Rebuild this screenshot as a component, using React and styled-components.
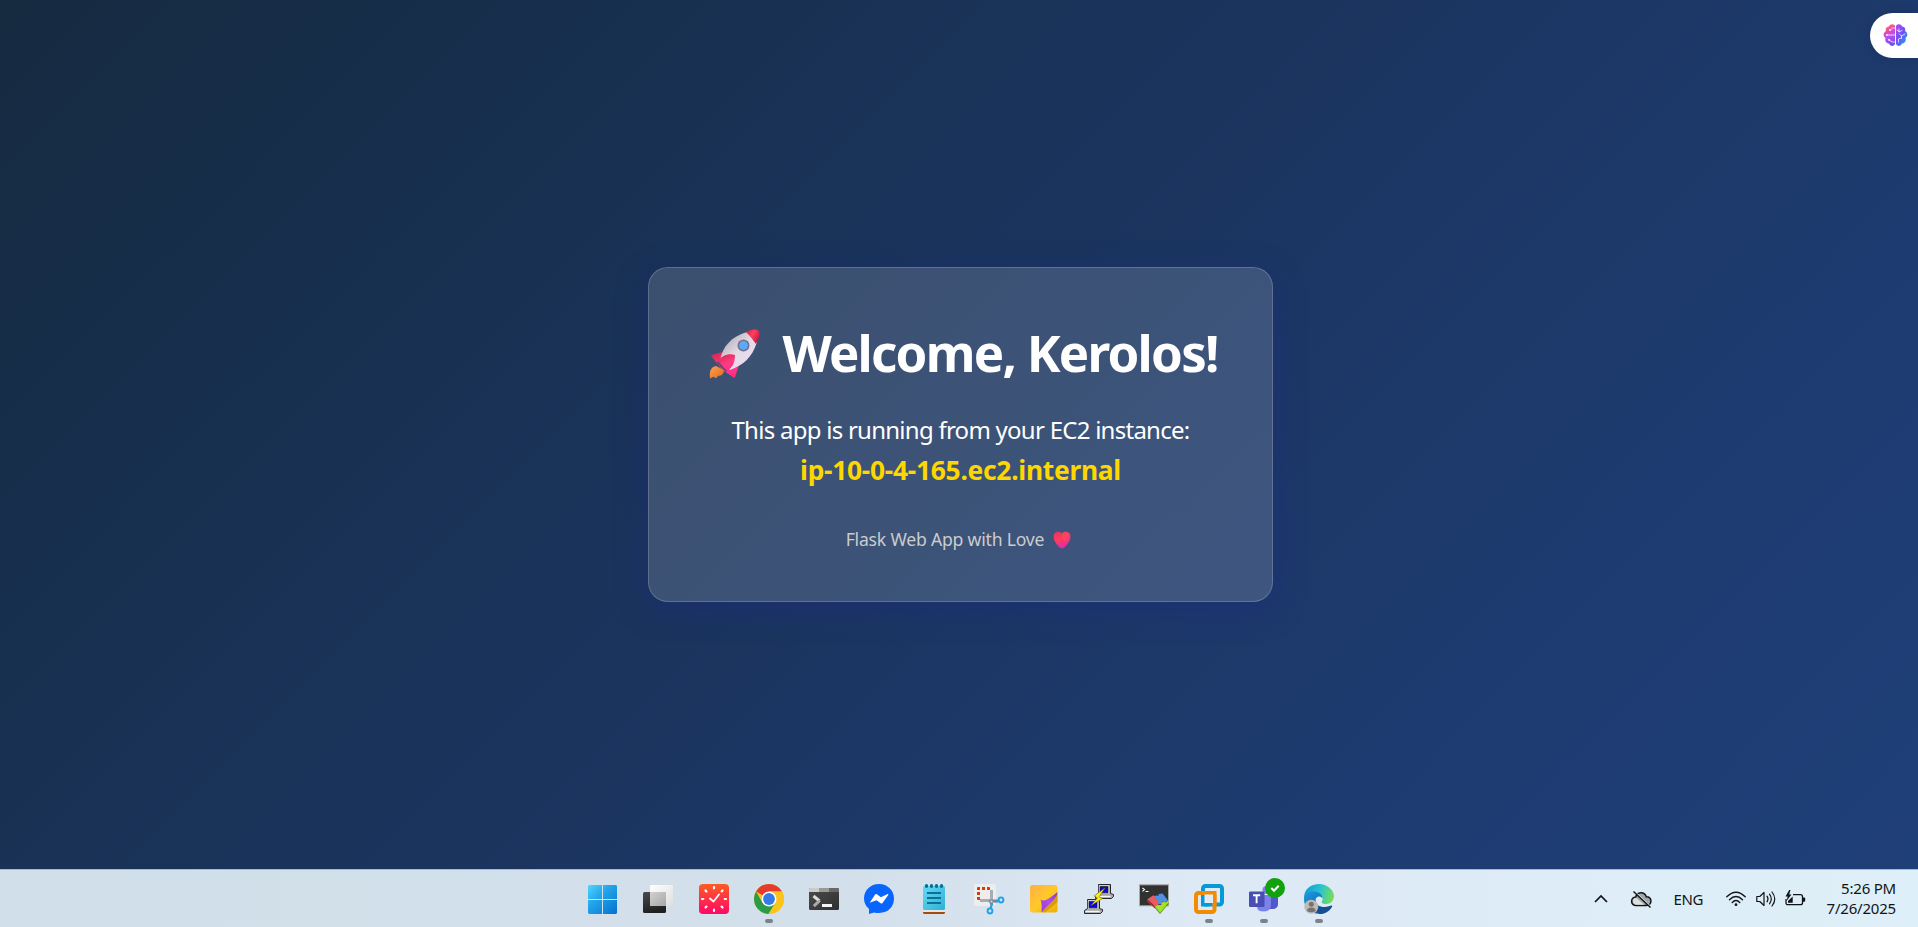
import React from "react";
import styled, { createGlobalStyle } from "styled-components";

const GlobalStyle = createGlobalStyle`
  * { box-sizing: border-box; }
  html, body, #root { margin: 0; height: 100%; }
  body { overflow: hidden; font-family: "Segoe UI", "Noto Sans", "Open Sans", sans-serif; }
`;

const Screen = styled.div`
  display: flex;
  flex-direction: column;
  width: 100%;
  height: 100vh;
`;

const Page = styled.main`
  position: relative;
  flex: 1;
  display: flex;
  align-items: center;
  justify-content: center;
  padding-left: 3px;
  background: linear-gradient(135deg, #162a40 0%, #172f4d 20%, #1b3560 50%, #1e3c72 80%, #1f3f79 100%);
`;

const Card = styled.section`
  display: flex;
  flex-direction: column;
  align-items: center;
  width: 625px;
  height: 335px;
  padding-top: 50px;
  border-radius: 20px;
  border: 1px solid rgba(255, 255, 255, 0.18);
  background: rgba(255, 255, 255, 0.15);
  box-shadow: 0 8px 32px rgba(31, 38, 135, 0.37);
  color: #fff;
`;

const Title = styled.h1`
  display: flex;
  align-items: center;
  gap: 21px;
  height: 68px;
  margin: 0 0 24px;
  padding-left: 6px;
  font-size: 51px;
  line-height: 68px;
  font-weight: 700;
  letter-spacing: -1.76px;
  white-space: nowrap;
  svg { position: relative; top: 2px; }
`;

const Lead = styled.p`
  margin: 0;
  font-size: 24px;
  line-height: 39px;
  letter-spacing: -0.74px;
  white-space: nowrap;
`;

const Host = styled.strong`
  font-size: 26.4px;
  line-height: 42px;
  font-weight: 700;
  letter-spacing: -0.28px;
  color: #ffd700;
`;

const Footer = styled.footer`
  display: flex;
  align-items: center;
  gap: 9px;
  margin-top: 36px;
  padding-right: 4px;
  font-size: 17.6px;
  line-height: 24px;
  letter-spacing: -0.2px;
  color: #ccc;
  white-space: nowrap;
  svg { position: relative; top: 1px; }
`;

const SideTab = styled.button`
  position: absolute;
  top: 13px;
  right: 0;
  width: 48px;
  height: 45px;
  padding: 0 0 1px 13px;
  display: flex;
  align-items: center;
  border: 0;
  border-radius: 23px 0 0 23px;
  background: #fff;
  box-shadow: 0 0 10px rgba(0, 0, 0, 0.12);
`;

const Taskbar = styled.nav`
  display: flex;
  height: 58px;
  padding: 0 22px 0 589px;
  border-top: 1px solid #adb8c5;
  background: linear-gradient(90deg, #d0dfe9 0%, #d3e0eb 45%, #dde9f4 62%, #deecf7 80%, #ddeff8 100%);
`;

const Apps = styled.div`
  display: flex;
  gap: 25px;
  padding-top: 14px;
`;

const AppButton = styled.div`
  position: relative;
  width: 30px;
  height: 30px;
  svg { display: block; overflow: visible; }
  &::after {
    content: "";
    display: ${(p) => (p.$running ? "block" : "none")};
    position: absolute;
    left: 11px;
    top: 35px;
    width: 8px;
    height: 4px;
    border-radius: 2px;
    background: #7b8289;
  }
`;

const Tray = styled.div`
  display: flex;
  align-items: center;
  margin-left: auto;
  height: 57px;
  color: #111417;
  font-size: 15px;
  svg { display: block; overflow: visible; }
`;

const TrayItem = styled.div`
  width: ${(p) => p.$w}px;
  margin-right: ${(p) => p.$gap}px;
  white-space: nowrap;
  letter-spacing: -0.35px;
`;

const Clock = styled.time`
  display: flex;
  flex-direction: column;
  align-items: flex-end;
  padding-bottom: 2px;
  line-height: 20px;
  letter-spacing: -0.2px;
  white-space: nowrap;
`;

const Rocket = () => (
  <svg width="52" height="50" viewBox="0 0 52 50">
    <defs>
      <linearGradient id="rb" x1="0" y1="0" x2="1" y2="1">
        <stop offset="0.2" stopColor="#bdb7bd" /><stop offset="0.5" stopColor="#e4dae5" /><stop offset="1" stopColor="#f0dcf8" />
      </linearGradient>
      <linearGradient id="rr" x1="0" y1="0" x2="1" y2="0.6">
        <stop offset="0" stopColor="#d91f45" /><stop offset="0.5" stopColor="#ff3e62" /><stop offset="1" stopColor="#c81840" />
      </linearGradient>
      <linearGradient id="rf" x1="0.2" y1="0" x2="0.7" y2="1">
        <stop offset="0" stopColor="#dd2754" /><stop offset="0.6" stopColor="#ff3c83" /><stop offset="1" stopColor="#ff2c89" />
      </linearGradient>
      <linearGradient id="ro" x1="0" y1="0" x2="1" y2="1">
        <stop offset="0" stopColor="#ffa052" /><stop offset="1" stopColor="#dd6c20" />
      </linearGradient>
    </defs>
    <path d="M7 37c-5 1-7 5-6 12 1 1 3-2 4-1 1 2 3 1 4-1 4 0 6-3 6-6z" fill="url(#ro)" />
    <path d="M13 23 3 26c-1 0-1 1 0 2l8 10 4 4 9 6c1 1 2 1 2 0l4-12z" fill="url(#rf)" />
    <path d="M8 34 17 43l1-2-9-9z" fill="#5d4774" />
    <path d="M11 31C14 17 22 8 38 3l10 10C43 29 34 36 21 41z" fill="url(#rb)" />
    <path d="M9 32c4-6 11-8 17-6 0 7-2 12-8 16z" fill="url(#rf)" />
    <path d="M37 3c4-2 8-3 11-2 3 1 3 5 2 7l-3 7c-3-4-6-8-10-12z" fill="url(#rr)" />
    <circle cx="34.5" cy="16.5" r="6" fill="#72728f" />
    <circle cx="34.5" cy="16.5" r="4.4" fill="#5ba9fb" />
  </svg>
);

const Heart = () => (
  <svg width="18" height="18" viewBox="0 0 18 18">
    <defs>
      <linearGradient id="hg" x1="0.2" y1="0" x2="0.5" y2="1">
        <stop offset="0" stopColor="#e9365b" /><stop offset="0.5" stopColor="#ff3b63" /><stop offset="1" stopColor="#d92ab2" />
      </linearGradient>
    </defs>
    <path d="M9 2.400C7 0 3 .4 1.300 2.500-.6 5.500 1 11 6 16c2 1.900 4 1.900 6 0 5-5 6.600-10.500 4.700-13.500C15 .4 11 0 9 2.400z" fill="url(#hg)" />
    <path d="M9 2.400c2-2.400 6-2 7 .4-1 5-3 7-6 8z" fill="#ff4a60" opacity=".6" />
  </svg>
);

const Brain = () => (
  <svg width="25" height="24" viewBox="0 0 25 24">
    <defs>
      <linearGradient id="bl" x1="0.2" y1="0" x2="0.5" y2="1">
        <stop offset="0" stopColor="#ff8b24" /><stop offset="0.3" stopColor="#ef48b0" /><stop offset="0.6" stopColor="#b94df5" /><stop offset="1" stopColor="#744df0" />
      </linearGradient>
      <linearGradient id="br" x1="0" y1="0" x2="0.8" y2="1">
        <stop offset="0" stopColor="#b44bee" /><stop offset="0.5" stopColor="#7350f4" /><stop offset="1" stopColor="#12a6f8" />
      </linearGradient>
    </defs>
    <path d="M12 3C11 .5 6.500 .8 6 3.600 3.500 3.600 2 6 3 8 0 9.500 0 13.500 2.500 15 1.500 18 3.500 20.500 6 20.500 7 23.800 11 23.500 12 21z" fill="url(#bl)" />
    <path d="M13 3C14 .5 18.500 .8 19 3.600 21.500 3.600 23 6 22 8 25 9.500 25 13.500 22.500 15 23.500 18 21.500 20.500 19 20.500 18 23.800 14 23.500 13 21z" fill="url(#br)" />
    <g stroke="#fff" strokeWidth=".75" fill="none" strokeLinecap="round">
      <path d="M11.500 5H9.500L7.500 7M3.500 12H12M11.500 19H9.500L6 17M16 6v3l3-1.500M16 8.500 14 7M22 11l-3.500 2-2-2M18.500 13v2.500M15.500 19v-3l2.500-1" />
    </g>
    <g fill="#fff"><circle cx="7" cy="7" r=".9" /><circle cx="4" cy="12" r=".9" /><circle cx="6" cy="16.800" r=".9" /></g>
  </svg>
);

const Icon = ({ children }) => <svg width="30" height="30" viewBox="0 0 30 30">{children}</svg>;

const Windows = () => (
  <Icon>
    <defs>
      <linearGradient id="wg" gradientUnits="userSpaceOnUse" x1="0" y1="0" x2="28" y2="30">
        <stop offset="0" stopColor="#4fd6ff" /><stop offset="0.4" stopColor="#22a5e9" /><stop offset="1" stopColor="#0470cf" />
      </linearGradient>
    </defs>
    <path fill="url(#wg)" d="M0 1h13v14H-1V2zM14 1h13l1 1v13H14zM-1 16h14v14H0l-1-1zM14 16h14v13l-1 1H14z" />
  </Icon>
);

const TaskView = () => (
  <Icon>
    <defs>
      <linearGradient id="tk" x1="0" y1="0" x2="0.3" y2="1"><stop offset="0" stopColor="#4a4a4a" /><stop offset="1" stopColor="#202020" /></linearGradient>
      <linearGradient id="tl" x1="0" y1="0" x2="1" y2="1"><stop offset="0" stopColor="#fff" /><stop offset="1" stopColor="#dedede" /></linearGradient>
      <linearGradient id="to" x1="0" y1="0" x2="1" y2="1"><stop offset="0" stopColor="#d2d2d2" /><stop offset="1" stopColor="#a6a6a6" /></linearGradient>
    </defs>
    <rect x="-1" y="8" width="23" height="21" rx="1.500" fill="url(#tk)" />
    <rect x="6" y="1" width="23" height="21" rx="1" fill="url(#tl)" />
    <path d="M6 8h16v14H7l-1-1z" fill="url(#to)" />
  </Icon>
);

const RedClock = () => (
  <Icon>
    <defs><linearGradient id="cg" x1="0" y1="0" x2="0" y2="1"><stop offset="0" stopColor="#ff5c20" /><stop offset="1" stopColor="#ff0768" /></linearGradient></defs>
    <rect width="30" height="30" rx="4" fill="url(#cg)" />
    {[0, 45, 90, 135, 180, 225, 270, 315].map((a) => (
      <path key={a} d="M15 3v1.300" stroke="#fff" strokeWidth="2.200" strokeLinecap="round" transform={`rotate(${a} 15 15)`} />
    ))}
    <path d="m11 14.500 3.500 3 5.500-7" fill="none" stroke="#fff" strokeWidth="1.800" strokeLinecap="round" strokeLinejoin="round" />
  </Icon>
);

const Chrome = () => (
  <Icon>
    <circle cx="15" cy="15" r="15" fill="#fbc116" />
    <path d="M15 15 2 7.500A15 15 0 0 1 28 7.500H15z" fill="#e33b2e" />
    <path d="M2 7.500A15 15 0 0 0 14.500 30L21.500 18.700 15 15 8.500 18.700z" fill="#2b9b48" />
    <path d="M15 7.500h13A15 15 0 0 1 14.500 30l7-11.300z" fill="#fcc31b" />
    <circle cx="15" cy="15" r="7.500" fill="#fff" />
    <circle cx="15" cy="15" r="5.900" fill="#347be8" />
  </Icon>
);

const Terminal = () => (
  <Icon>
    <defs><linearGradient id="tg" x1="0" y1="0" x2="1" y2="1"><stop offset="0" stopColor="#4c4c4c" /><stop offset="1" stopColor="#303030" /></linearGradient></defs>
    <rect y="4" width="30" height="22" rx="1.500" fill="url(#tg)" />
    <path d="M1 4h9v4H0V5z" fill="#ccc" /><path d="M10 4h10v4H10z" fill="#999" /><path d="M20 4h9l1 1v3H20z" fill="#686868" />
    <path d="m4.500 12 6 5" stroke="#ddd" strokeWidth="3" fill="none" />
    <path d="m10.800 16.500-6 5.700" stroke="#aaa" strokeWidth="3" fill="none" />
    <rect x="13" y="20" width="10" height="3" fill="#f4f4f4" />
  </Icon>
);

const Messenger = () => (
  <Icon>
    <path d="M15 0C6.500 0 0 6.300 0 14.500c0 4.200 1.800 7.900 5 10.500V30l5-1.600C23 31 30 23.500 30 14.500 30 6.300 23.500 0 15 0z" fill="#0866ff" />
    <path d="m5.700 18.700 5.400-8.100q.8-1 1.800-.3l4 2.900 6.200-3c1-.4 1.600.2 1 1l-5.600 7.700q-.8 1-1.800.3l-4.200-3z" fill="#fff" />
  </Icon>
);

const Notepad = () => (
  <Icon>
    <defs><linearGradient id="ng" x1="0" y1="0" x2="1" y2="1"><stop offset="0" stopColor="#65d9f5" /><stop offset="1" stopColor="#2fb0d4" /></linearGradient></defs>
    <rect x="4" y="25" width="22" height="5" rx="1" fill="#e7e5e4" />
    <path d="M4 28h22v1l-1 1H5l-1-1z" fill="#a94b08" />
    <rect x="4" y="2" width="22" height="24" rx="1.500" fill="url(#ng)" />
    {[7.5, 12.5, 17.5, 22.5].map((x) => <ellipse key={x} cx={x} cy="2" rx="1.700" ry="2" fill="#077094" />)}
    <path d="M8 9h14M8 14h14M8 19h14" stroke="#0b7295" strokeWidth="2" />
  </Icon>
);

const Snip = () => (
  <Icon>
    <rect width="22" height="22" rx="2" fill="#eeedee" />
    <path d="M3 6V4q0-1 1-1h2v3zM8 3h3v3H8zM13 3h2q1 0 1 1v2h-3zM3 8h3v3H3zM3 13h3v3H4q-1 0-1-1z" fill="#d83b01" />
    <path d="M6 16.500h10M17.500 6v10" stroke="#a8adb4" strokeWidth="3" />
    <path d="m16 16 2 5M16 17h8" stroke="#7d8792" strokeWidth="3" />
    <circle cx="27" cy="16" r="2.400" fill="none" stroke="#27a3e3" strokeWidth="2" />
    <circle cx="16" cy="27" r="2.400" fill="none" stroke="#27a3e3" strokeWidth="2" />
    <path d="m18 20-1.500 4.500M21 17.500l3.600-.8" stroke="#27a3e3" strokeWidth="2.300" />
    <circle cx="17.500" cy="17.500" r="1" fill="#ddd" />
  </Icon>
);

const Sticky = () => (
  <Icon>
    <defs>
      <linearGradient id="sg" x1="0" y1="0" x2="1" y2="1"><stop offset="0" stopColor="#ffae49" /><stop offset="0.5" stopColor="#ffc928" /><stop offset="1" stopColor="#edb000" /></linearGradient>
      <linearGradient id="sp" x1="0" y1="1" x2="1" y2="0"><stop offset="0" stopColor="#8d3bd0" /><stop offset="0.5" stopColor="#b04fea" /><stop offset="1" stopColor="#803cc4" /></linearGradient>
    </defs>
    <rect x="1" y="1" width="27.500" height="27.500" rx="2.500" fill="url(#sg)" />
    <path d="M12 28 28.500 9v9L16 28.500z" fill="#c88c08" opacity=".65" />
    <path d="M11.500 15.500q3 2 7-.2T28.500 8q-.5 5-6 10t-10 10.300q.9-8-1-12.800z" fill="url(#sp)" />
  </Icon>
);

const Computer = ({ x, y }) => (
  <g transform={`translate(${x} ${y})`}>
    <path d="M3 0h12v9l3 1v2l-2 2H0v-3l3-2z" fill="#aaa" stroke="#151515" strokeWidth=".9" />
    <path d="M3.300.8h10.400v8H3.300z" fill="#ddd" />
    <path d="M4.500 2h8v6.300h-8z" fill="#0808d8" stroke="#111" strokeWidth=".6" />
    <path d="M1 12h14" stroke="#f6f6f6" strokeWidth="1.300" />
  </g>
);

const Putty = () => (
  <Icon>
    <Computer x={11.5} y={0.5} />
    <Computer x={0.5} y={15.5} />
    <path d="m21 4-11 8 3.500 1.800L7 21.500l11.500-7-3.500-1.700z" fill="#ffef18" stroke="#6f6811" strokeWidth=".6" />
  </Icon>
);

const Moba = () => (
  <Icon>
    <rect x=".5" y=".8" width="29" height="21" fill="#303232" stroke="#aaa9a8" />
    <path d="m3.500 4 2 1.500-2 1.800M6.500 7.500h3" fill="none" stroke="#fff" strokeWidth="1.100" />
    <path d="m8.300 15.300 6-4 2 1.200-.3 1.800 2.300.3 1.700-1 3 4-6.500 5.200z" fill="#e95b5d" />
    <path d="m15.500 12.500 2-1.200 1 .8 1.500-1-.7-1 4.300-.6 5.400 7-3.500 2.300-1.200-1.300-1.800.6.300 1.500-2 1.200-2.300-3 1-1.800-1-1.200-1.800.7z" fill="#4f8fe4" />
    <path d="m16 23 3-2.300 1.800.8 1.800-1.300-.4-1.600 3-.9 1 .8 2.600-1.500 1 1.500L21 28.500z" fill="#a5e02b" />
    <path d="M16.500 23 21 28.500l8.800-10v1.300L21 30l-5-5.700z" fill="#5d9f20" />
    <path d="m8.300 15.300 8.200 7.700-.5 1.500-8-7z" fill="#b8282d" />
  </Icon>
);

const VMware = () => (
  <Icon>
    <rect x="9" y="2" width="19" height="18.500" rx="2.500" fill="none" stroke="#0798d8" strokeWidth="4" />
    <rect x="2" y="9" width="18.500" height="19" rx="2.500" fill="none" stroke="#f38b00" strokeWidth="4" />
    <path d="M9 7v13.500h6" fill="none" stroke="#0798d8" strokeWidth="4" />
    <path d="M6 9h14.500v13" fill="none" stroke="#f38b00" strokeWidth="4" />
    <rect x="11" y="11" width="7.500" height="7.500" fill="none" stroke="#e6eef5" strokeWidth="1" />
  </Icon>
);

const Teams = () => (
  <Icon>
    <circle cx="17.500" cy="6" r="4" fill="#7b83eb" />
    <path d="M20 11h9v9q0 4-4 5h-5z" fill="#5059c9" />
    <path d="M10 11h12v9q0 7.500-7 7.500T8 23z" fill="#7b83eb" />
    <rect y="7.500" width="15.500" height="15.500" rx="1.300" fill="#484eb5" />
    <path d="M4 11.300h7.200M7.600 11.300v8" stroke="#fff" strokeWidth="1.900" />
    <circle cx="26" cy="4" r="10" fill="#13a10e" />
    <path d="m22.300 4 2.700 2.700 4.700-4.900" fill="none" stroke="#fff" strokeWidth="2" />
  </Icon>
);

const Edge = () => (
  <Icon>
    <defs>
      <linearGradient id="eg" x1="0" y1="0.4" x2="1" y2="0.6"><stop offset="0" stopColor="#159cd5" /><stop offset="0.5" stopColor="#2ac2cf" /><stop offset="1" stopColor="#7bdf52" /></linearGradient>
      <linearGradient id="eb" x1="0" y1="0" x2="0.7" y2="1"><stop offset="0" stopColor="#1c9be0" /><stop offset="1" stopColor="#0d66b5" /></linearGradient>
    </defs>
    <path d="M0 14C0 5 7 0 15 0s15 6 15 12c0 5-3.500 8-8 8-4 0-5-2-4-3 2-2 0-7-5-7-6 0-10 2-13 4z" fill="url(#eg)" />
    <path d="M0 14.500C1 9.500 5 7.500 9 7.500c6 0 9.500 3 9.500 7-2-3-6-2.500-7 1-1.500 5 1 11 6 14C8 31-.5 24 0 14.500z" fill="url(#eb)" />
    <path d="M11.500 15.500c-.5 5.500 4 7.500 9 7.500 3 0 6-1.500 7-1.500s1 .7 0 2.200C25 27.500 20 30.500 15.500 30 10 27 8.500 20 11.500 15.500z" fill="#164f91" />
    <circle cx="7.300" cy="22.700" r="7" fill="#bdbab7" />
    <circle cx="7.300" cy="20.200" r="2.500" fill="#77736f" />
    <path d="M3 27q0-3.500 4.300-3.500t4.300 3.500q-4 2.500-8.600 0z" fill="#77736f" />
  </Icon>
);

const APPS = [
  [Windows], [TaskView], [RedClock], [Chrome, true], [Terminal], [Messenger], [Notepad],
  [Snip], [Sticky], [Putty], [Moba], [VMware, true], [Teams, true], [Edge, true],
];

const Chevron = () => (
  <svg width="14" height="10" viewBox="0 0 14 10"><path d="m1 8 6-6 6 6" fill="none" stroke="currentColor" strokeWidth="1.700" /></svg>
);

const CloudOff = () => (
  <svg width="21" height="18" viewBox="0 0 21 18">
    <path d="M5 15.500a4.200 4.200 0 0 1-.3-8.500C6 1.500 13.500 1 15.300 6.700c6.200-.3 6.200 8.800 0 8.800z" fill="#a3a6a9" stroke="#111417" strokeWidth="1.500" />
    <path d="m5 7.800 8.500 6.900H5c-4-1-4-6 0-6.900z" fill="#e1dfde" />
    <path d="m3.500 1.500 16 15" stroke="#ddebf5" strokeWidth="1.300" />
    <path d="m2.500 1.500 17 16" stroke="#111417" strokeWidth="1.400" />
  </svg>
);

const Wifi = () => (
  <svg width="20" height="16" viewBox="0 0 20 16" fill="none" stroke="currentColor" strokeWidth="1.400" strokeLinecap="round">
    <path d="M.8 5.800q9.200-9 18.400 0M3.500 8.700q6.500-6.200 13 0M6.200 11.400q3.800-3.600 7.600 0" />
    <circle cx="10" cy="13.700" r="1.400" fill="currentColor" stroke="none" />
  </svg>
);

const Speaker = () => (
  <svg width="20" height="16" viewBox="0 0 20 16" fill="none" stroke="currentColor" strokeWidth="1.200" strokeLinecap="round" strokeLinejoin="round">
    <path d="M.8 5.500h3L8 1.500v13l-4.200-4h-3zM11 5.200q2 2.800 0 5.600M13.500 3.200q3.600 4.800 0 9.600M16 1q5.500 7 0 14" />
  </svg>
);

const Battery = () => (
  <svg width="21" height="18" viewBox="0 0 21 18">
    <path d="M8 4.700h7.500q2 0 2 2v6q0 2-2 2H3q-2 0-2-2V9" fill="none" stroke="currentColor" strokeWidth="1.300" />
    <path d="M18 7.500h1.200q1 0 1 1v2.300q0 1-1 1H18z" fill="currentColor" />
    <path d="M3 12.800V11l4.700-4.500v6.300z" fill="currentColor" />
    <path d="M4.200 0 .5 6.500h2.200L1.500 11 6.500 4.500H4.200L5.500 0z" fill="currentColor" />
  </svg>
);

export default function App() {
  return (
    <Screen>
      <GlobalStyle />
      <Page>
        <Card>
          <Title><Rocket /><span>Welcome, Kerolos!</span></Title>
          <Lead>This app is running from your EC2 instance:</Lead>
          <Host>ip-10-0-4-165.ec2.internal</Host>
          <Footer><span>Flask Web App with Love</span><Heart /></Footer>
        </Card>
        <SideTab aria-label="Assistant"><Brain /></SideTab>
      </Page>
      <Taskbar>
        <Apps>
          {APPS.map(([Glyph, running], i) => <AppButton key={i} $running={running}><Glyph /></AppButton>)}
        </Apps>
        <Tray>
          <TrayItem $w={14} $gap={23}><Chevron /></TrayItem>
          <TrayItem $w={21} $gap={22}><CloudOff /></TrayItem>
          <TrayItem $w={29} $gap={23}>ENG</TrayItem>
          <TrayItem $w={20} $gap={10}><Wifi /></TrayItem>
          <TrayItem $w={20} $gap={9}><Speaker /></TrayItem>
          <TrayItem $w={21} $gap={21}><Battery /></TrayItem>
          <Clock><span>5:26 PM</span><span>7/26/2025</span></Clock>
        </Tray>
      </Taskbar>
    </Screen>
  );
}
